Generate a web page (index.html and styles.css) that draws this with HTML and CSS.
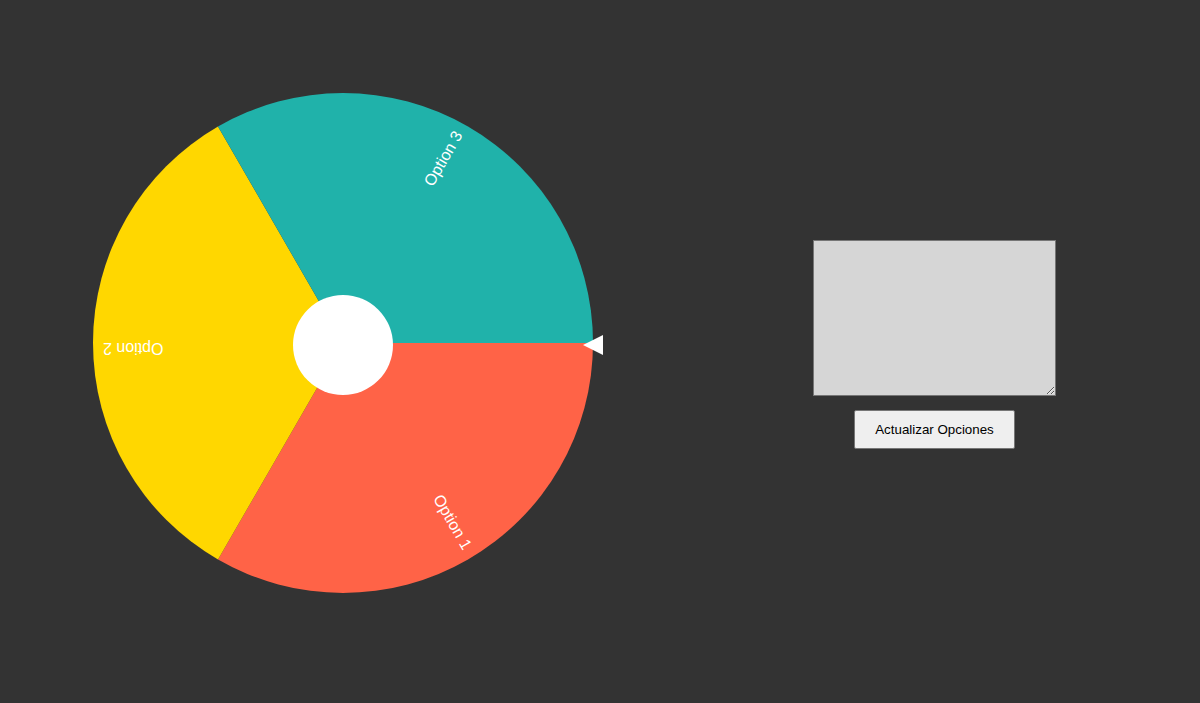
FILE: index.html
```html
<!DOCTYPE html>
<html lang="es">
<head>
<meta charset="utf-8">
<title>Ruleta</title>
<link rel="stylesheet" href="styles.css">
</head>
<body>
<div class="page">
  <div class="wheel">
    <svg class="wheel-svg" width="500" height="500" viewBox="0 0 500 500">
      <path d="M250 250 L500 250 A250 250 0 0 1 125 466.506 Z" fill="#FF6347"/>
      <path d="M250 250 L125 466.506 A250 250 0 0 1 125 33.494 Z" fill="#FFD700"/>
      <path d="M250 250 L125 33.494 A250 250 0 0 1 500 250 Z" fill="#20B2AA"/>
      <text class="label" x="490" y="250" transform="rotate(60 250 250)">Option 1</text>
      <text class="label" x="490" y="250" transform="rotate(180 250 250)">Option 2</text>
      <text class="label" x="490" y="250" transform="rotate(300 250 250)">Option 3</text>
    </svg>
    <div class="hub"></div>
    <div class="pointer"></div>
  </div>
  <div class="controls">
    <textarea class="options"></textarea>
    <button class="update">Actualizar Opciones</button>
  </div>
</div>
</body>
</html>
```

FILE: styles.css
```css
html, body {
  margin: 0;
  padding: 0;
  background: #333333;
}
body {
  width: 1200px;
  height: 703px;
  overflow: hidden;
  font-family: "Liberation Sans", Arial, sans-serif;
}
.page {
  display: flex;
  align-items: flex-start;
  padding: 93px 0 0 93px;
}
.wheel {
  position: relative;
  width: 500px;
  height: 504px;
}
.wheel-svg {
  display: block;
}
.label {
  fill: #ffffff;
  font-family: "Liberation Sans", Arial, sans-serif;
  font-size: 16px;
  text-anchor: end;
}
.hub {
  position: absolute;
  left: 50%;
  top: 50%;
  width: 100px;
  height: 100px;
  margin: -50px 0 0 -50px;
  border-radius: 50%;
  background: #ffffff;
}
.pointer {
  position: absolute;
  right: -10px;
  top: 50%;
  margin-top: -10px;
  width: 0;
  height: 0;
  border-top: 10px solid transparent;
  border-bottom: 10px solid transparent;
  border-right: 20px solid #ffffff;
}
.controls {
  display: flex;
  flex-direction: column;
  align-items: center;
  margin: 147px 0 0 220px;
  gap: 14px;
}
.options {
  box-sizing: border-box;
  width: 243px;
  height: 156px;
  margin: 0;
  background: #d6d6d6;
  border: 1px solid #767676;
  border-radius: 0;
  padding: 2px;
  font-family: "Liberation Mono", monospace;
  font-size: 13px;
}
.update {
  box-sizing: border-box;
  width: 161px;
  height: 39px;
  margin: 0;
  padding: 0 20px;
  background: #efefef;
  border: 1px solid #767676;
  border-radius: 2px;
  color: #000000;
  font-family: "Liberation Sans", Arial, sans-serif;
  font-size: 13.33px;
}
```
